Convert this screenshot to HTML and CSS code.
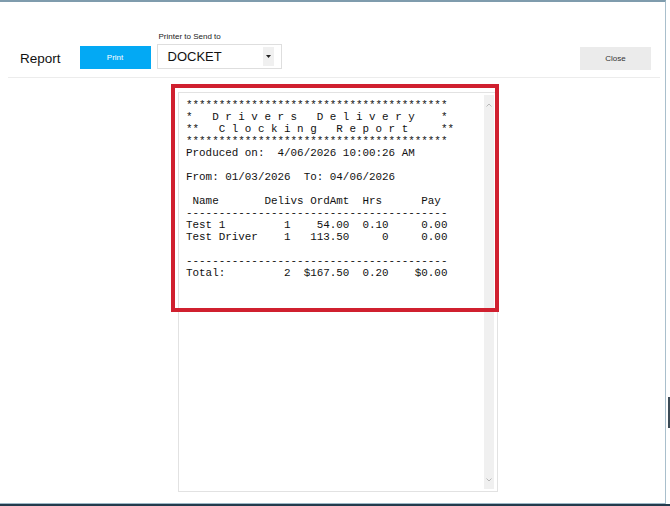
FILE: index.html
```html
<!DOCTYPE html>
<html>
  <head>
    <title>Report</title>
    <link rel="stylesheet" href="styles.css">
  </head>
  <body>
    <div class="screen">
      <div class="window">
        <header class="toolbar">
          <h1 class="toolbar__title">Report</h1>
          <button class="btn btn--print">Print</button>
          <div class="printer">
            <label class="printer__label">Printer to Send to</label>
            <div class="printer__select">
              <span class="printer__value">DOCKET</span>
              <span class="printer__arrow">
                <svg width="5" height="3" viewBox="0 0 5 3"><path d="M0 0h5L2.5 3z" fill="#222"/></svg>
              </span>
            </div>
          </div>
          <button class="btn btn--close">Close</button>
        </header>

        <main class="preview">
          <div class="docket">
<pre class="docket__text">****************************************
*   D r i v e r s   D e l i v e r y    *
**   C l o c k i n g   R e p o r t     **
****************************************
Produced on:  4/06/2026 10:00:26 AM

From: 01/03/2026  To: 04/06/2026

 Name       Delivs OrdAmt  Hrs      Pay
----------------------------------------
Test 1         1    54.00  0.10     0.00
Test Driver    1   113.50     0     0.00

----------------------------------------
Total:         2  $167.50  0.20    $0.00</pre>
            <div class="docket__scroll">
              <svg width="6" height="4" viewBox="0 0 6 4"><path d="M0.5 3.5L3 1l2.5 2.5" fill="none" stroke="#b8b8b8"/></svg>
              <svg width="6" height="4" viewBox="0 0 6 4"><path d="M0.5 0.5L3 3l2.5-2.5" fill="none" stroke="#b8b8b8"/></svg>
            </div>
            <!-- highlight round the printed part -->
            <div class="docket__mark"></div>
          </div>
        </main>
      </div>
      <div class="screen__edge"><div class="screen__tab"></div></div>
    </div>
    <div class="screen__bottom"></div>
  </body>
</html>
```

FILE: styles.css
```css
body { margin: 0; background: #fff; font-family: "Liberation Sans", Arial, sans-serif; color: #111; }

.screen { display: flex; }
.window {
  width: 666px;
  height: 504px;
  box-sizing: border-box;
  border-top: 2px solid #7f9cad;
  border-right: 1px solid #a9bfcc;
  border-bottom: 1px solid #9db7c6;
}
.screen__edge { flex: 1; }
.screen__tab { margin: 397px 0 0 2px; width: 2px; height: 31px; background: #3d4c57; }
.screen__bottom { height: 2px; background: #233b4c; }

/* top bar */
.toolbar {
  display: flex;
  align-items: flex-start;
  height: 76px;
  box-sizing: border-box;
  margin: 0 5px 0 8px;
  padding: 0 9px 0 12px;
  border-bottom: 1px solid #ececec;
}
.toolbar__title {
  margin: 49px 0 0;
  font-size: 13.5px;
  line-height: 16px;
  font-weight: normal;
}

.btn {
  border: none;
  padding: 0;
  font-family: inherit;
  font-size: 8px;
}
.btn--print {
  margin: 44px 0 0 19px;
  width: 71px;
  height: 23px;
  background: #03a9f4;
  color: #fff;
}
.btn--close {
  margin: 45px 0 0 auto;
  width: 71px;
  height: 23px;
  background: #ebebeb;
  color: #333;
}

.printer { margin: 30px 0 0 6px; }
.printer__label {
  display: block;
  padding-left: 2px;
  font-size: 8px;
  line-height: 10px;
  color: #222;
}
.printer__select {
  display: flex;
  align-items: center;
  margin-top: 2px;
  width: 125px;
  height: 25px;
  box-sizing: border-box;
  border: 1px solid #dedede;
  padding: 0 7px 0 10px;
}
.printer__value { flex: 1; font-size: 13px; }
.printer__arrow {
  display: flex;
  align-items: center;
  justify-content: center;
  width: 11px;
  height: 19px;
  background: #f0f0f0;
}

/* docket preview */
.preview { padding: 14px 0 0 178px; }
.docket {
  position: relative;
  display: flex;
  width: 320px;
  height: 400px;
  box-sizing: border-box;
  border: 1px solid #e2e2e2;
  padding: 2px 3px 2px 0;
}
.docket__text {
  flex: 1;
  margin: 0;
  padding: 4px 0 0 7px;
  font-family: "Liberation Mono", "Courier New", monospace;
  font-size: 10.9px;
  line-height: 12px;
  color: #111;
}
.docket__scroll {
  width: 10px;
  background: #f0f0f0;
  display: flex;
  flex-direction: column;
  justify-content: space-between;
  align-items: center;
  padding: 8px 0 7px;
  box-sizing: border-box;
}
.docket__mark {
  position: absolute;
  left: -8px;
  top: -9px;
  width: 328px;
  height: 228px;
  box-sizing: border-box;
  border: 4px solid #d0202f;
}
```
